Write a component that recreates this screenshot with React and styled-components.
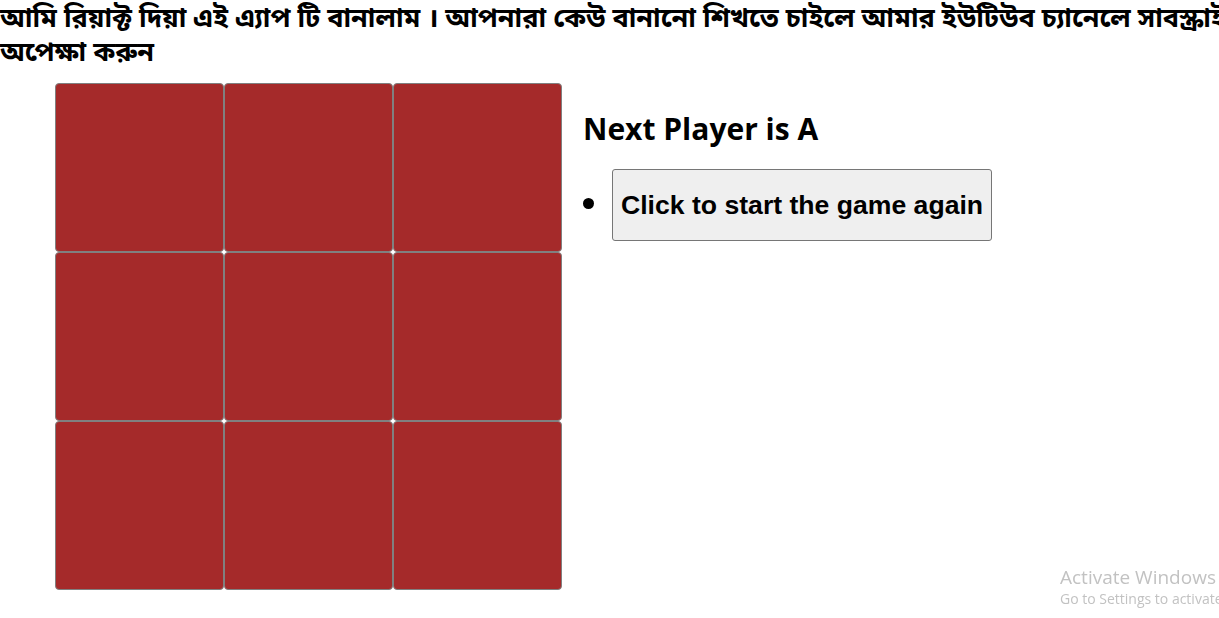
import styled, { createGlobalStyle } from 'styled-components';

const GlobalStyle = createGlobalStyle`
  html, body {
    margin: 0;
    padding: 0;
    background: #ffffff;
    overflow: hidden;
  }

  body {
    font-family: "Liberation Sans", Arial, sans-serif;
    color: #000000;
  }
`;

export default function App() {
  const squares = Array(9).fill(null);

  return (
    <>
      <GlobalStyle />
      <Title>
        <Line>আমি রিয়াক্ট দিয়া এই এ্যাপ টি বানালাম । আপনারা কেউ বানানো শিখতে চাইলে আমার ইউটিউব চ্যানেলে সাবস্ক্রাইব করে</Line>
        <Line>অপেক্ষা করুন</Line>
      </Title>
      <Game>
        <Board>
          {squares.map((value, i) => (
            <Square key={i}>{value}</Square>
          ))}
        </Board>
        <Info>
          <Status>Next Player is A</Status>
          <Moves>
            <li>
              <RestartButton>Click to start the game again</RestartButton>
            </li>
          </Moves>
        </Info>
      </Game>
      <Watermark>
        <WatermarkTitle>Activate Windows</WatermarkTitle>
        <WatermarkText>Go to Settings to activate Windows.</WatermarkText>
      </Watermark>
    </>
  );
}

const Title = styled.h2`
  margin: 0;
  padding-top: 3px;
  font-family: "Noto Sans Bengali", "Noto Sans", "DejaVu Sans", sans-serif;
  font-size: 27px;
  font-weight: 700;
  line-height: 34px;
`;

const Line = styled.span`
  display: block;
  white-space: nowrap;
`;

const Game = styled.div`
  display: flex;
  align-items: flex-start;
  padding-left: 55px;
  margin-top: 12px;
`;

const Board = styled.div`
  display: grid;
  grid-template-columns: repeat(3, 169px);
  grid-auto-rows: 169px;
`;

const Square = styled.button`
  width: 169px;
  height: 169px;
  margin: 0;
  padding: 0;
  background-color: #a52a2a;
  border: 1px solid #808080;
  border-radius: 4px;
  cursor: pointer;
`;

const Info = styled.div`
  margin-left: 21px;
`;

const Status = styled.div`
  margin-top: 26px;
  font-family: "Open Sans", "Noto Sans", sans-serif;
  font-size: 30px;
  font-weight: 700;
  line-height: 40px;
`;

const Moves = styled.ul`
  margin: 20px 0 0;
  padding-left: 29px;
  font-size: 38px;
  line-height: 1;
`;

const RestartButton = styled.button`
  padding: 20px 8px;
  font-family: "Liberation Sans", Arial, sans-serif;
  font-size: 26.6px;
  font-weight: 700;
  line-height: 30px;
  color: #000000;
  background-color: #efefef;
  border: 1px solid #767676;
  border-radius: 3px;
  cursor: pointer;
`;

const Watermark = styled.div`
  position: fixed;
  left: 1060px;
  bottom: 9px;
  white-space: nowrap;
  font-family: "Open Sans", "Noto Sans", sans-serif;
  color: #c2c2c2;
`;

const WatermarkTitle = styled.div`
  font-size: 19px;
  line-height: 24px;
`;

const WatermarkText = styled.div`
  font-size: 14px;
  line-height: 20px;
`;
